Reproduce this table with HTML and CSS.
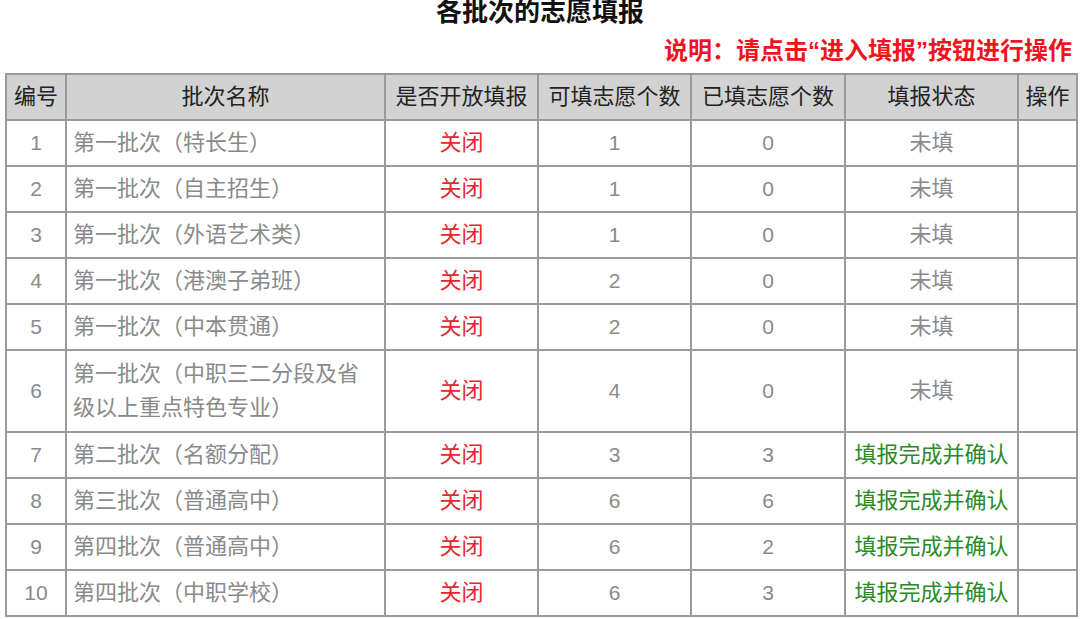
FILE: index.html
```html
<!DOCTYPE html>
<html lang="zh-CN">
<head>
<meta charset="utf-8">
<title>各批次的志愿填报</title>
<link rel="stylesheet" href="styles.css">
</head>
<body>
<h1 class="title">各批次的志愿填报</h1>
<p class="note">说明：请点击“进入填报”按钮进行操作</p>
<table class="grid">
  <colgroup>
    <col class="c-no"><col class="c-name"><col class="c-open"><col class="c-max"><col class="c-done"><col class="c-state"><col class="c-op">
  </colgroup>
  <thead>
    <tr><th>编号</th><th>批次名称</th><th>是否开放填报</th><th>可填志愿个数</th><th>已填志愿个数</th><th>填报状态</th><th>操作</th></tr>
  </thead>
  <tbody>
    <tr><td class="num">1</td><td class="name">第一批次（特长生）</td><td class="closed">关闭</td><td class="num">1</td><td class="num">0</td><td class="pending">未填</td><td></td></tr>
    <tr><td class="num">2</td><td class="name">第一批次（自主招生）</td><td class="closed">关闭</td><td class="num">1</td><td class="num">0</td><td class="pending">未填</td><td></td></tr>
    <tr><td class="num">3</td><td class="name">第一批次（外语艺术类）</td><td class="closed">关闭</td><td class="num">1</td><td class="num">0</td><td class="pending">未填</td><td></td></tr>
    <tr><td class="num">4</td><td class="name">第一批次（港澳子弟班）</td><td class="closed">关闭</td><td class="num">2</td><td class="num">0</td><td class="pending">未填</td><td></td></tr>
    <tr><td class="num">5</td><td class="name">第一批次（中本贯通）</td><td class="closed">关闭</td><td class="num">2</td><td class="num">0</td><td class="pending">未填</td><td></td></tr>
    <tr class="tall"><td class="num">6</td><td class="name">第一批次（中职三二分段及省级以上重点特色专业）</td><td class="closed">关闭</td><td class="num">4</td><td class="num">0</td><td class="pending">未填</td><td></td></tr>
    <tr><td class="num">7</td><td class="name">第二批次（名额分配）</td><td class="closed">关闭</td><td class="num">3</td><td class="num">3</td><td class="done">填报完成并确认</td><td></td></tr>
    <tr><td class="num">8</td><td class="name">第三批次（普通高中）</td><td class="closed">关闭</td><td class="num">6</td><td class="num">6</td><td class="done">填报完成并确认</td><td></td></tr>
    <tr><td class="num">9</td><td class="name">第四批次（普通高中）</td><td class="closed">关闭</td><td class="num">6</td><td class="num">2</td><td class="done">填报完成并确认</td><td></td></tr>
    <tr><td class="num">10</td><td class="name">第四批次（中职学校）</td><td class="closed">关闭</td><td class="num">6</td><td class="num">3</td><td class="done">填报完成并确认</td><td></td></tr>
  </tbody>
</table>
</body>
</html>
```
FILE: styles.css
```css
html, body {
  margin: 0;
  padding: 0;
  background: #ffffff;
}
body {
  font-family: "Liberation Sans", "Noto Sans CJK SC", sans-serif;
  color: #222;
  overflow: hidden;
}
.title {
  margin: 0;
  font-size: 26px;
  line-height: 24px;
  font-weight: 700;
  text-align: center;
  color: #111;
}
.note {
  margin: 12px 8px 0 0;
  font-size: 24px;
  line-height: 30px;
  font-weight: 700;
  text-align: right;
  color: #f0141e;
}
.grid {
  margin: 7px 0 0 5px;
  width: 1071px;
  border-collapse: collapse;
  table-layout: fixed;
  font-size: 22px;
}
.c-no { width: 60px; }
.c-name { width: 319px; }
.c-open { width: 153px; }
.c-max { width: 153px; }
.c-done { width: 154px; }
.c-state { width: 173px; }
.c-op { width: 59px; }
.grid th, .grid td {
  border: 2px solid #9a9a9a;
  padding: 5px 8px;
  line-height: 34px;
  text-align: center;
  font-weight: 400;
}
.grid th {
  background: #d2d2d2;
  color: #222;
  padding: 5px 2px;
}
.grid td {
  color: #8a8a8a;
}
.grid td.name {
  text-align: left;
  padding: 5px 10px 5px 6px;
}
.grid td.num {
  font-size: 21px;
}
.grid tr.tall td {
  padding-top: 6px;
  padding-bottom: 6px;
}
.grid td.closed {
  color: #e8262b;
}
.grid td.done {
  color: #2b8a24;
}
```
